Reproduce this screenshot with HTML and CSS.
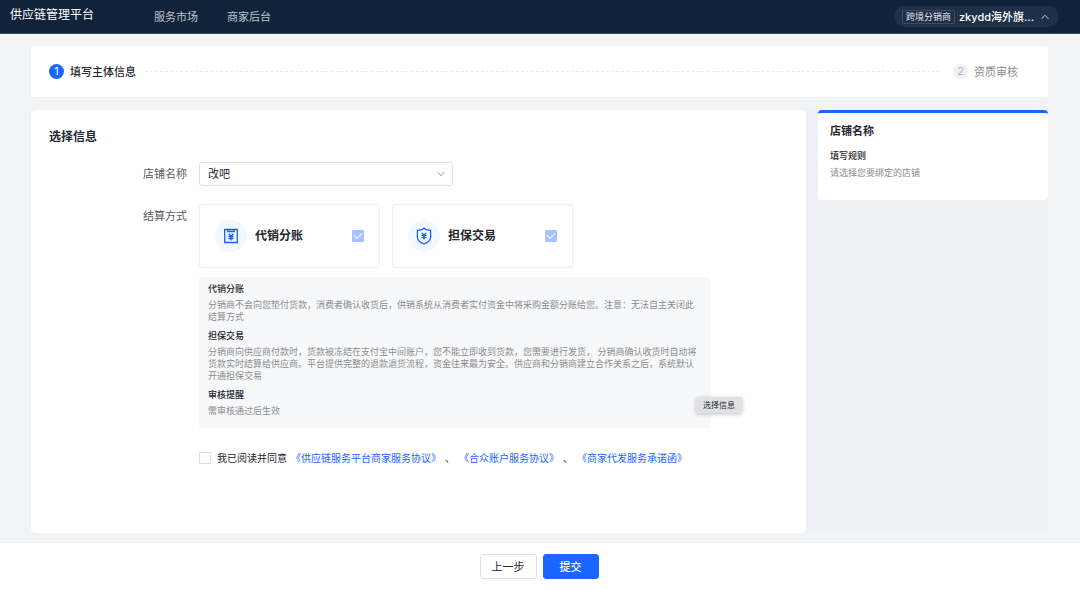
FILE: index.html
```html
<!DOCTYPE html>
<html lang="zh-CN">
<head>
<meta charset="utf-8">
<meta name="viewport" content="width=device-width, initial-scale=1">
<title>供应链管理平台</title>
<link rel="stylesheet" href="styles.css">
</head>
<body>
<header class="topbar">
  <div class="brand">供应链管理平台</div>
  <nav class="nav">
    <a href="#market">服务市场</a>
    <a href="#admin">商家后台</a>
  </nav>
  <button class="account" type="button">
    <span class="role">跨境分销商</span>
    <span class="account-name">zkydd海外旗...</span>
    <svg class="caret" viewBox="0 0 10 10" aria-hidden="true"><path d="M1.500 7 5 3.200 8.500 7"/></svg>
  </button>
</header>

<main class="page">
  <ol class="steps">
    <li class="step current"><span class="step-num">1</span>填写主体信息</li>
    <li class="step-line" aria-hidden="true"></li>
    <li class="step"><span class="step-num">2</span>资质审核</li>
  </ol>

  <div class="columns">
    <form class="panel" id="bind-form">
      <h1 class="panel-title">选择信息</h1>
      <div class="form-row">
        <label class="row-label" for="shop">店铺名称</label>
        <div class="select-box">
          <select id="shop"><option>改吧</option></select>
          <svg class="caret" viewBox="0 0 10 10" aria-hidden="true"><path d="M1.500 3 5 6.800 8.500 3"/></svg>
        </div>
      </div>
      <div class="form-row">
        <span class="row-label">结算方式</span>
        <div class="row-body">
          <div class="options">
            <label class="option">
              <span class="option-icon">
                <svg viewBox="0 0 16 16" aria-hidden="true"><path d="M1.700 1.500H14.300V14.500H1.700Z"/><path d="M4.800 1.500V3.500H11.200V1.500"/><path d="M5.700 5.700 8 8.200 10.300 5.700M8 8.200V12.500M5.500 8.500H10.500M5.500 10.500H10.500"/></svg>
              </span>
              <span class="option-name">代销分账</span>
              <input class="check on" type="checkbox" checked disabled>
            </label>
            <label class="option">
              <span class="option-icon">
                <svg viewBox="0 0 16 16" aria-hidden="true"><path d="M8 .2C6.500 1.600 3.500 2.300 1.400 2.300V9C1.400 12.800 4.800 14.800 8 16C11.200 14.800 14.600 12.800 14.600 9V2.300C12.500 2.300 9.500 1.600 8 .2Z"/><path d="M5.800 4.900 8 7.300 10.200 4.900M8 7.300V11.600M5.500 7.700H10.500M5.500 9.700H10.500"/></svg>
              </span>
              <span class="option-name">担保交易</span>
              <input class="check on" type="checkbox" checked disabled>
            </label>
          </div>
          <dl class="notes">
            <dt>代销分账</dt>
            <dd>分销商不会向您垫付货款，消费者确认收货后，供销系统从消费者实付资金中将采购金额分账给您。注意：无法自主关闭此结算方式</dd>
            <dt>担保交易</dt>
            <dd>分销商向供应商付款时，货款被冻结在支付宝中间账户，您不能立即收到货款，您需要进行发货， 分销商确认收货时自动将货款实时结算给供应商。平台提供完整的退款退货流程，资金往来最为安全。供应商和分销商建立合作关系之后，系统默认开通担保交易</dd>
            <dt>审核提醒</dt>
            <dd>需审核通过后生效</dd>
          </dl>
          <div class="agreement">
            <input class="check" type="checkbox" id="agree">
            <label for="agree">我已阅读并同意</label>
            <a href="#service">《供应链服务平台商家服务协议》</a>
            <span>、</span>
            <a href="#fund">《合众账户服务协议》</a>
            <span>、</span>
            <a href="#promise">《商家代发服务承诺函》</a>
          </div>
        </div>
      </div>
      <div class="tooltip" role="tooltip">选择信息</div>
    </form>

    <aside class="help">
      <section class="help-card">
        <h2>店铺名称</h2>
        <h3>填写规则</h3>
        <p>请选择您要绑定的店铺</p>
      </section>
    </aside>
  </div>
</main>

<footer class="actions">
  <button class="btn" type="button">上一步</button>
  <button class="btn primary" type="submit" form="bind-form">提交</button>
</footer>
</body>
</html>
```
FILE: styles.css
```css
* { box-sizing: border-box; }

body {
  margin: 0;
  min-height: 100vh;
  display: flex;
  flex-direction: column;
  background: #f2f3f5;
  color: #24272e;
  font: 11px/16px Inter, "Noto Sans CJK SC", sans-serif;
  text-spacing-trim: space-all;
}

h1, h2, h3, p, ol, dl, dd { margin: 0; padding: 0; }
a { text-decoration: none; }
button, select { font: inherit; color: inherit; }

.caret {
  width: 10px;
  height: 10px;
  fill: none;
  stroke: #999;
  stroke-width: 1;
}

/* Top bar */
.topbar {
  display: flex;
  align-items: center;
  height: 34px;
  padding: 0 21px 0 10px;
  background: #11233b;
  border-bottom: 1px solid #3a4759;
  color: #fff;
}
.brand { font-size: 12px; padding-bottom: 4px; }
.nav { display: flex; gap: 29px; margin-left: 60px; }
.nav a { color: #bcc2ca; }
.account {
  display: flex;
  align-items: center;
  gap: 4px;
  height: 21px;
  margin-left: auto;
  padding: 0 9px 0 8px;
  border: 0;
  border-radius: 11px;
  background: #1f3048;
  color: #fff;
}
.account .caret { margin-left: 2px; stroke: #c3c8cf; }
.role {
  padding: 0 3px;
  border: 1px solid #3d4b60;
  border-radius: 2px;
  font-size: 9px;
  line-height: 12px;
  color: #e3e6ea;
}
.account-name { font-weight: 500; }

/* Page */
.page {
  flex: 1;
  display: flex;
  flex-direction: column;
  gap: 13px;
  padding: 12px 32px 10px 31px;
}
.steps {
  display: flex;
  align-items: center;
  min-height: 51px;
  padding: 0 30px 0 18px;
  border-radius: 3px;
  background: #fff;
  list-style: none;
}
.step { display: flex; align-items: center; gap: 6px; color: #8c8c8c; }
.step-num {
  width: 15px;
  height: 15px;
  border-radius: 50%;
  background: #f0f1f3;
  color: #b4b6ba;
  line-height: 15px;
  text-align: center;
}
.step.current { color: #24272e; font-weight: 500; }
.current .step-num { background: #1a66ff; color: #fff; font-weight: 400; }
.step-line { flex: 1; margin: 0 13px 0 9px; border-top: 1px dashed #ebebeb; }

.columns {
  flex: 1;
  display: grid;
  grid-template-columns: 1fr 242px;
}
.panel {
  position: relative;
  padding: 18px;
  border-radius: 5px;
  background: #fff;
}
.panel-title { font-size: 12px; font-weight: 700; line-height: 18px; }
.form-row { display: flex; gap: 12px; margin-top: 18px; }
.panel-title + .form-row { margin-top: 16px; }
.row-label {
  width: 138px;
  flex: none;
  line-height: 24px;
  text-align: right;
  color: #565a61;
}
.row-body { flex: 1; min-width: 0; }

.select-box { position: relative; width: 254px; }
.select-box select {
  width: 100%;
  height: 24px;
  padding: 0 24px 0 8px;
  appearance: none;
  border: 1px solid #dfe0e3;
  border-radius: 3px;
  background: #fff;
}
.select-box .caret {
  position: absolute;
  top: 7px;
  right: 7px;
  pointer-events: none;
}

.options { display: flex; gap: 12px; }
.option {
  display: flex;
  align-items: center;
  width: 181px;
  height: 64px;
  padding: 0 15px;
  border: 1px solid #eeeff1;
  border-radius: 3px;
}
.option-icon {
  display: grid;
  place-items: center;
  width: 32px;
  height: 32px;
  border-radius: 50%;
  background: #f2f8ff;
}
.option-icon svg {
  width: 16px;
  height: 16px;
  fill: none;
  stroke: #1a5cff;
  stroke-width: 1.3;
  overflow: visible;
}
.option-name { margin-left: 8px; font-size: 12px; font-weight: 700; line-height: 18px; }

.check {
  display: grid;
  place-items: center;
  flex: none;
  width: 12px;
  height: 12px;
  margin: 0;
  appearance: none;
  border: 1px solid #dcdde0;
  border-radius: 1px;
  background: #fff;
}
.check.on { margin-left: auto; border-color: #a6c1ff; background: #a6c1ff; }
.check:checked::after {
  content: "";
  width: 7px;
  height: 4px;
  margin-bottom: 3px;
  border: solid #fff;
  border-width: 0 0 1px 1px;
  transform: rotate(-45deg);
}

.notes {
  max-width: 512px;
  margin-top: 9px;
  padding: 6px 9px 11px;
  border-radius: 2px;
  background: #f7f8fa;
  font-size: 9px;
  line-height: 12px;
}
.notes dt { margin-bottom: 4px; font-weight: 500; }
.notes dd { margin-bottom: 7px; color: #8c8c8c; }
.notes dd:last-child { margin-bottom: 0; }

.agreement {
  display: flex;
  flex-wrap: wrap;
  align-items: center;
  column-gap: 4px;
  margin-top: 22px;
  font-size: 10px;
}
.agreement label { margin-left: 2px; }
.agreement a { color: #1a66ff; }

.tooltip {
  position: absolute;
  top: 287px;
  left: 665px;
  padding: 0 7px;
  border-radius: 2px;
  background: #e1e2e5;
  box-shadow: 0 1px 4px rgba(0, 0, 0, .25);
  font-size: 8px;
  line-height: 16px;
}

.help { padding-left: 12px; background: #eff1f5; }
.help-card {
  min-height: 90px;
  padding: 10px 12px 18px;
  border-top: 3px solid #1a66ff;
  border-radius: 4px;
  background: #fff;
}
.help-card h2 { font-size: 11px; font-weight: 700; line-height: 16px; }
.help-card h3 { margin-top: 9px; font-size: 9px; font-weight: 500; line-height: 16px; }
.help-card p { font-size: 9px; line-height: 18px; color: #8c8c8c; }

/* Footer */
.actions {
  display: flex;
  justify-content: center;
  gap: 6px;
  min-height: 47px;
  padding: 11px 2px 0 0;
  background: #fff;
}
.btn {
  height: 25px;
  min-width: 56px;
  padding: 0 11px;
  border: 1px solid #dfe0e3;
  border-radius: 3px;
  background: #fff;
}
.btn.primary { border-color: #1a66ff; background: #1a66ff; color: #fff; font-weight: 500; }
```
